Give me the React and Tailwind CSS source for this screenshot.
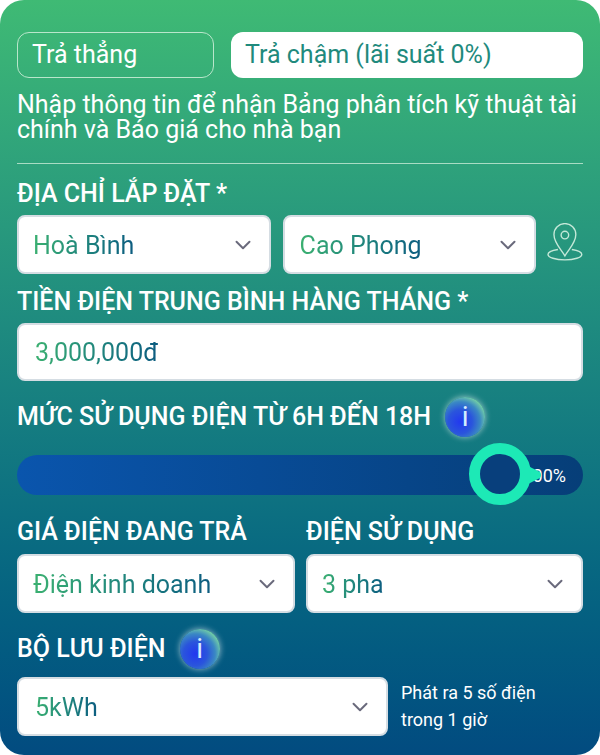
import { ChevronDown } from "lucide-react";

const FONT = "font-['Roboto',sans-serif]";
const GRAD_TEXT = "bg-gradient-to-r from-[#3bb070] to-[#0d5c80] bg-clip-text text-transparent";

// ── Dropdown-looking box ───────────────────────────────────────────────────────
const SelectBox = ({ value, className = "" }) => (
  <div className={`h-[59px] flex items-center justify-between pr-[13px] bg-white rounded-lg border-2 border-[#d5dde3] ${className}`}>
    <span className={`pt-[2px] text-[25px] leading-[30px] ${GRAD_TEXT}`}>{value}</span>
    <ChevronDown className="w-[26px] h-[26px] text-[#6a6a7c]" strokeWidth={1.8} />
  </div>
);

const InfoDot = () => (
  <div className="w-10 h-10 rounded-full flex items-center justify-center bg-[radial-gradient(circle_at_38%_62%,#2238f0_0px,#2a55dc_12px,#3a88c4_20px,#7edca0_28px)] shadow-[0_0_6px_rgba(255,255,255,0.6)]">
    <span className="text-[28px] leading-none text-[#d5ecff]">i</span>
  </div>
);

const Label = ({ children }) => (
  <div className="text-[25px] leading-[30px] font-medium text-white whitespace-nowrap">{children}</div>
);

export default function App() {
  return (
    <div className={`${FONT} w-[600px] h-[755px] overflow-hidden bg-white`}>
      <div className="h-full rounded-[24px] bg-gradient-to-b from-[#3fba74] to-[#024b80] pt-[32px] pl-[17px] pr-[17px] flex flex-col">

        {/* Tabs */}
        <div className="flex gap-[17px]">
          <div className="w-[197px] h-[46px] flex items-center pl-[14px] rounded-xl border border-[#b9e6cb] text-white text-[25px]">Trả thẳng</div>
          <div className="flex-1 h-[46px] flex items-center pl-[14px] rounded-xl bg-white text-[#1f8a7d] text-[25px]">Trả chậm (lãi suất 0%)</div>
        </div>

        <p className="mt-[14px] text-[25px] leading-[25px] text-white">
          Nhập thông tin để nhận Bảng phân tích kỹ thuật tài chính và Báo giá cho nhà bạn
        </p>

        <div className="mt-[21px] h-px bg-[#a9dcc4]" />

        {/* Address */}
        <div className="mt-[15px]"><Label>ĐỊA CHỈ LẮP ĐẶT *</Label></div>
        <div className="mt-[6px] flex items-center gap-3">
          <SelectBox value="Hoà Bình" className="w-[255px] pl-[14px]" />
          <SelectBox value="Cao Phong" className="w-[255px] pl-[15px]" />
          <svg className="w-9 h-10 -ml-[1px] -mt-[4px]" viewBox="0 0 36 40" fill="none" stroke="#c4e8d8" strokeWidth="1.4">
            <path d="M18 33 C14 26 7 20 7 11.5 a11 11 0 0 1 22 0 C29 20 22 26 18 33z" />
            <circle cx="18" cy="12" r="3.8" />
            <path d="M11 26.5 C5 27.5 1 29.3 1 31.5 c0 3 7.5 5.5 17 5.5 s17 -2.5 17 -5.5 c0 -2.2 -4 -4 -10 -5" />
          </svg>
        </div>

        {/* Monthly bill */}
        <div className="mt-[13px]"><Label>TIỀN ĐIỆN TRUNG BÌNH HÀNG THÁNG *</Label></div>
        <div className="mt-[6px] h-[58px] flex items-center pl-[16px] bg-white rounded-lg border-2 border-[#d5dde3]">
          <span className={`pt-[2px] text-[25px] ${GRAD_TEXT}`}>3,000,000đ</span>
        </div>

        {/* Usage slider */}
        <div className="mt-[16px] flex items-center gap-[14px]">
          <Label>MỨC SỬ DỤNG ĐIỆN TỪ 6H ĐẾN 18H</Label>
          <InfoDot />
        </div>
        <div className="relative mt-[18px] h-10 rounded-full bg-gradient-to-r from-[#0a55ad] to-[#063e78] flex items-center justify-end pr-[17px]">
          <span className="text-white text-[18px]">100%</span>
          <svg className="absolute left-[505px] top-[8px] w-[20px] h-[24px]" viewBox="0 0 20 24">
            <path d="M0 0 L18 9 Q20 12 18 15 L0 24 Z" fill="#1de9b6" />
          </svg>
          <div className="absolute left-[452px] top-[-12px] w-[62px] h-[62px] rounded-full border-[11px] border-[#1de9b6] bg-[#083f7c]" />
        </div>

        {/* Tariff and phase */}
        <div className="mt-[22px] grid grid-cols-[278px_1fr] gap-x-[11px]">
          <Label>GIÁ ĐIỆN ĐANG TRẢ</Label>
          <Label>ĐIỆN SỬ DỤNG</Label>
          <SelectBox value="Điện kinh doanh" className="mt-[7px] pl-[14px]" />
          <SelectBox value="3 pha" className="mt-[7px] pl-[14px]" />
        </div>

        {/* Storage */}
        <div className="mt-[16px] flex items-center gap-[14px]">
          <Label>BỘ LƯU ĐIỆN</Label>
          <InfoDot />
        </div>
        <div className="mt-[8px] flex items-center gap-[13px]">
          <SelectBox value="5kWh" className="w-[371px] pl-[16px]" />
          <p className="-mt-[2px] text-[18px] leading-[27px] text-white">Phát ra 5 số điện<br />trong 1 giờ</p>
        </div>
      </div>
    </div>
  );
}
